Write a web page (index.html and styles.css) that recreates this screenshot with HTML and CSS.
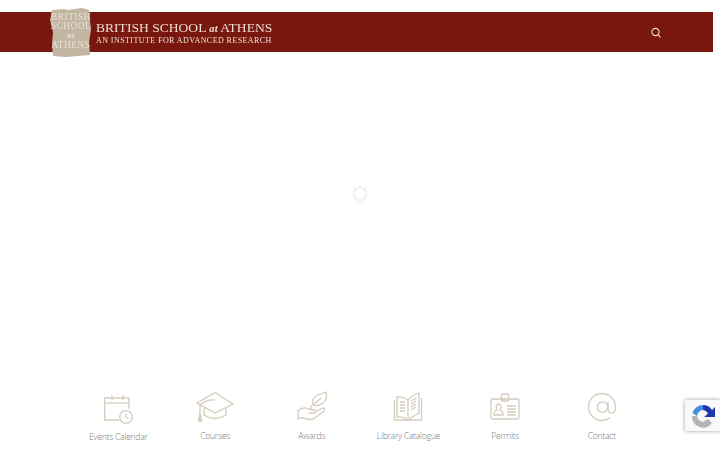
FILE: index.html
```html
<!DOCTYPE html>
<html lang="en">

<head>
    <meta charset="UTF-8">
    <title>British School at Athens</title>
    <link rel="stylesheet" href="styles.css">
</head>

<body>
    <header class="topbar">
        <a class="logo-mark">
            <svg class="logo-paper" width="42" height="50" viewBox="0 0 42 50">
                <path d="M2 2 L14 1 L18 2 L32 0 L39 2 L40 12 L41 22 L39 34 L40 47 L28 48 L16 49 L3 48 L2 36 L3 24 L0 12 Z" fill="#c2b6a2" />
            </svg>
            <span class="logo-words">
                <span>BRITISH</span>
                <span>SCHOOL</span>
                <span class="logo-at">at</span>
                <span>ATHENS</span>
            </span>
        </a>
        <div class="logo-text">
            <div class="logo-title">BRITISH SCHOOL <em>at</em> ATHENS</div>
            <div class="logo-sub">AN INSTITUTE FOR ADVANCED RESEARCH</div>
        </div>
        <svg class="search" width="12" height="12" viewBox="0 0 12 12">
            <circle cx="5.5" cy="5" r="3.6" />
            <path d="M8.2 7.7 L10.5 10.5" />
        </svg>
    </header>

    <main class="loading">
        <svg class="spinner" width="22" height="22" viewBox="0 0 22 22">
            <circle cx="11" cy="11" r="6.5" />
            <path d="M11 2.5 V3.5 M17 5 L16.3 5.7 M19.5 11 H18.5 M17 17 L16.3 16.3 M11 19.5 V18.5 M5 17 L5.7 16.3 M2.5 11 H3.5 M5 5 L5.7 5.7" />
        </svg>
    </main>

    <nav class="links">
        <a class="link">
            <svg class="icon icon-low" width="40" height="33" viewBox="0 -1 40 33">
                <path d="M21 28 H6.7 V6 H31 V17" />
                <path d="M6.7 11 H31" />
                <path d="M14 3 V8 M25 3 V8" />
                <circle cx="28" cy="25" r="6.3" />
                <path d="M28 21.5 V25 L30.5 27" />
            </svg>
            <span>Events Calendar</span>
        </a>
        <a class="link">
            <svg class="icon" width="40" height="32" viewBox="0 0 40 32">
                <path d="M20 1.5 L38 13 L20 22 L2 12 Z" />
                <path d="M9 17 V24 Q20 31 31 24 V17" />
                <path d="M5 14 Q12 8 20 9" />
                <path d="M5 14 V24" />
                <path d="M3.5 30 L4.5 24 H5.5 L6.5 30 Z" class="fill" />
            </svg>
            <span>Courses</span>
        </a>
        <a class="link">
            <svg class="icon" width="40" height="32" viewBox="0 0 40 32">
                <path d="M21 14 Q19 7 26 4 Q30 3 34 1 Q36 8 31 12 Q26 16 21 14 Z" />
                <path d="M21 14 L29 7" />
                <path d="M19 19 V14" />
                <path d="M6 19 V29 M6 20 Q11 15 16 18 L22 19 Q25 20 23 22 L17 22" />
                <path d="M23 21 L31 17 Q34 17 32 20 L23 27 Q18 30 12 27 L6 27" />
            </svg>
            <span>Awards</span>
        </a>
        <a class="link">
            <svg class="icon" width="40" height="32" viewBox="0 0 40 32">
                <path d="M20 9 Q14 5 9 6 V26 Q15 25 20 29 Q25 25 31 22 V2 Q24 4 20 9 Z" />
                <path d="M20 9 V29" />
                <path d="M6.5 9 V29 H33.5 V7" />
                <path d="M12 11 H17 M12 14 H17 M12 17 H17 M12 20 H17 M23 10 L28 7 M23 13 L28 10 M23 16 L28 13 M23 19 L28 16" />
            </svg>
            <span>Library Catalogue</span>
        </a>
        <a class="link">
            <svg class="icon" width="40" height="32" viewBox="0 -1 40 32">
                <rect x="6" y="7" width="28" height="20" rx="1.5" />
                <rect x="16.5" y="2" width="7" height="7" rx="1" />
                <path d="M9 23 Q9 19 12 18 Q10 14 13 12 Q16 12 16 15 Q16 17 15 18 Q18 19 18 23 Z" />
                <path d="M22 14 H31 M22 17 H31 M22 20 H31 M22 23 H31" />
            </svg>
            <span>Permits</span>
        </a>
        <a class="link">
            <svg class="icon" width="40" height="32" viewBox="0 0 40 32">
                <path d="M28 27 Q24 29.5 20 29.5 A13.5 13.5 0 1 1 33.5 16 Q33.5 22 29.5 22 Q26 22 26 18 V11" />
                <circle cx="20.5" cy="16" r="5.2" />
            </svg>
            <span>Contact</span>
        </a>
    </nav>

    <div class="recaptcha">
        <svg width="24" height="24" viewBox="0 0 24 24">
            <path d="M12 1 A11 11 0 0 0 1.5 9 L6 12 A6.5 6.5 0 0 1 12 6 Z" fill="#4a90e2" />
            <path d="M12 1 A11 11 0 0 1 21 6 L24 3 V13 H13 L17 9.5 A6.5 6.5 0 0 0 12 6 Z" fill="#1c3aa9" />
            <path d="M1 12 H6 A6.5 6.5 0 0 0 12 18 L17 15 L21 19 A11 11 0 0 1 1 12 Z" fill="#b4b4b4" />
        </svg>
    </div>
</body>

</html>
```

FILE: styles.css
```css
* {
    margin: 0;
    padding: 0;
    box-sizing: border-box;
}

body {
    width: 720px;
    height: 450px;
    overflow: hidden;
    background: #fff;
    font-family: "Open Sans", "Liberation Sans", sans-serif;
    color: #7a7a7a;
}

/* top bar */
.topbar {
    display: flex;
    align-items: center;
    width: 713px;
    height: 40px;
    margin-top: 12px;
    padding-left: 50px;
    padding-right: 51px;
    background: #78170e;
}

/* the paper square sticks out over the top and bottom of the bar */
.logo-mark {
    position: relative;
    flex: none;
    width: 42px;
    height: 50px;
    margin-top: 1px;
    filter: blur(0.3px);
}

.logo-paper {
    display: block;
}

.logo-words {
    position: absolute;
    top: 5px;
    left: 0;
    width: 42px;
    display: flex;
    flex-direction: column;
    align-items: center;
    font-family: "Liberation Serif", serif;
    font-size: 9.4px;
    letter-spacing: 0.5px;
    line-height: 9.4px;
    color: #e8e1d5;
    white-space: nowrap;
}

.logo-at {
    font-style: italic;
    font-weight: bold;
    font-size: 8.5px;
}

.logo-text {
    margin-left: 4px;
    font-family: "Liberation Serif", serif;
    color: #efdfd2;
    white-space: nowrap;
    filter: blur(0.3px);
}

.logo-title {
    font-size: 13.5px;
    line-height: 15px;
    letter-spacing: 0.04px;
}

.logo-title em {
    font-size: 10.5px;
    font-weight: bold;
}

.logo-sub {
    font-size: 8px;
    line-height: 9px;
    letter-spacing: 0.43px;
}

.search {
    margin-left: auto;
    margin-top: 2px;
    fill: none;
    stroke: #f4dcd4;
    stroke-width: 1.1;
}

/* loading spinner */
.loading {
    height: 338.5px;
    padding-top: 130.5px;
    text-align: center;
}

.spinner {
    fill: none;
    stroke: #eeeeee;
    stroke-width: 1.4;
}

/* bottom links */
.links {
    display: grid;
    grid-template-columns: repeat(6, 96.7px);
    padding-left: 70px;
    align-items: start;
}

.link {
    display: flex;
    flex-direction: column;
    align-items: center;
    font-size: 8.6px;
    font-weight: 300;
    letter-spacing: -0.25px;
    line-height: 12px;
    white-space: nowrap;
}

.icon {
    display: block;
    margin-bottom: 7px;
    fill: none;
    stroke: #d4ccbd;
    stroke-width: 1.3;
}

.icon .fill {
    fill: #d4ccbd;
}

.recaptcha {
    position: fixed;
    top: 400px;
    right: 0;
    width: 35px;
    height: 31px;
    display: flex;
    align-items: center;
    justify-content: center;
    background: #f9f9f9;
    box-shadow: 0 0 4px rgba(0, 0, 0, 0.4);
}
```
